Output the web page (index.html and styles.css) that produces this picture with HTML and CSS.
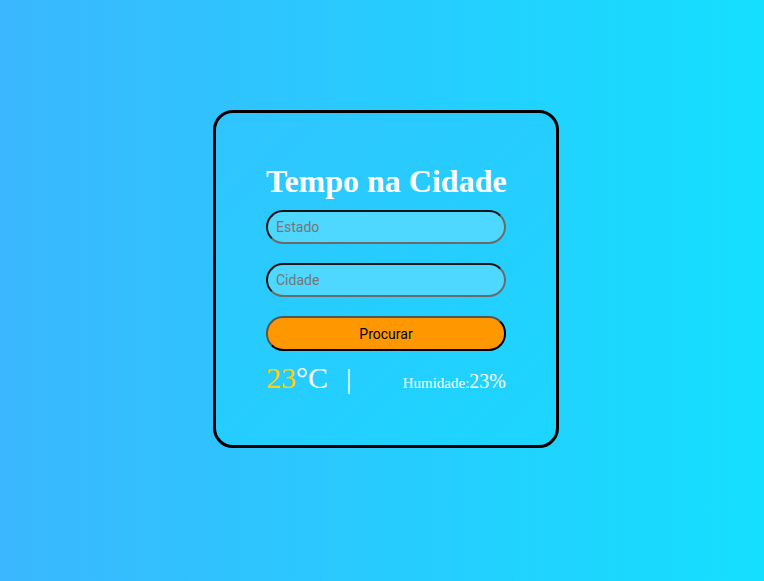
FILE: index.html
```html
<!DOCTYPE html>
<html>
<head>
<meta charset="utf-8">
<link rel="stylesheet" href="styles.css">
</head>
<body>
<div class="card">
  <h1 class="title">Tempo na Cidade</h1>
  <input class="field" type="text" placeholder="Estado">
  <input class="field" type="text" placeholder="Cidade">
  <button class="btn">Procurar</button>
  <div class="result">
    <span class="temp"><span class="num">23</span>°C</span>
    <span class="sep">|</span>
    <span class="hum">Humidade:<span class="humval">23%</span></span>
  </div>
</div>
</body>
</html>
```
FILE: styles.css
```css
html, body {
  margin: 0;
  height: 100%;
}
body {
  background: linear-gradient(90deg, #3bb7fe 0%, #14dffe 100%);
  display: flex;
  justify-content: center;
  align-items: flex-start;
  font-family: "Liberation Serif", serif;
}
.card {
  margin-top: 110px;
  margin-left: 8px;
  width: 240px;
  padding: 50px 50px 50px;
  border: 3px solid #000;
  border-radius: 20px;
  background: linear-gradient(135deg, #30c4fe 0%, #1bd6fe 100%);
  display: flex;
  flex-direction: column;
}
.title {
  margin: 0 0 10px;
  color: #fff;
  font-size: 32px;
  font-weight: bold;
  text-align: center;
  white-space: nowrap;
  line-height: 37px;
}
.field {
  box-sizing: border-box;
  height: 34px;
  width: 240px;
  margin: 0 0 19px;
  padding: 0 8px;
  border: 2px solid;
  border-color: #151515 #6a6a6a #6a6a6a #151515;
  border-radius: 17px;
  background: #4fd8ff;
  font-family: Roboto, "Liberation Sans", sans-serif;
  font-size: 14px;
  outline: none;
}
.field::placeholder {
  color: #757575;
}
.btn {
  box-sizing: border-box;
  height: 35px;
  width: 240px;
  border: 2px solid;
  border-color: #555 #000 #000 #555;
  border-radius: 17px;
  background: #ff9800;
  color: #000;
  font-family: Roboto, "Liberation Sans", sans-serif;
  font-size: 14px;
  margin: 0 0 10px;
}
.result {
  display: flex;
  align-items: baseline;
  color: #fff;
}
.temp {
  font-size: 30px;
}
.num {
  color: #ffd000;
}
.sep {
  font-size: 28px;
  margin-left: 18px;
}
.hum {
  margin-left: auto;
  font-size: 15px;
}
.humval {
  font-size: 20px;
}
```
